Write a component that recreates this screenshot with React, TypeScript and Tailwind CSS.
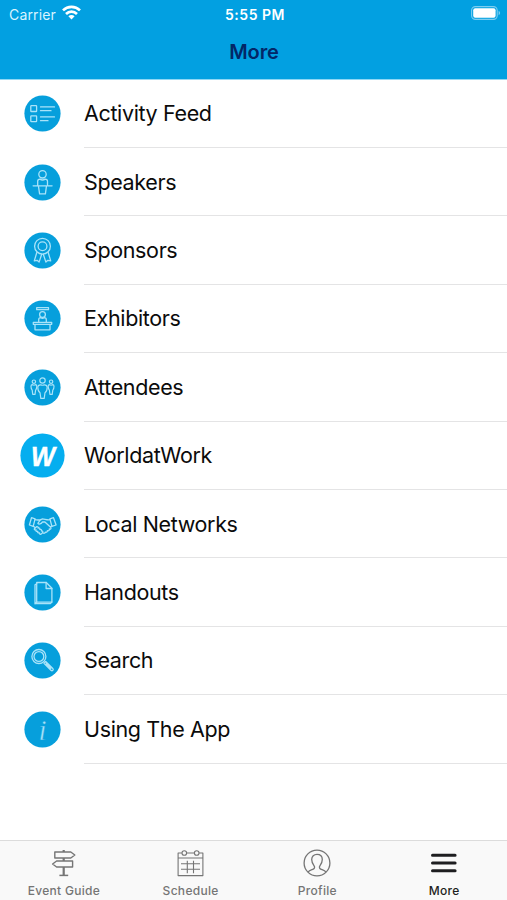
import React from 'react';

const ink = {
  fill: 'none',
  stroke: '#a9e3f9',
  strokeWidth: 1.3,
  strokeLinejoin: 'round',
  strokeLinecap: 'round',
} as const;

const FeedIcon = () => (
  <g {...ink}>
    <rect x="6.3" y="10.2" width="5.8" height="5.8" rx="0.6" />
    <rect x="6.3" y="20.4" width="5.8" height="5.8" rx="0.6" />
    <path d="M16 11.4h14M16 15.2h10.5M16 21.4h14M16 25.2h7.5" />
  </g>
);

const SpeakerIcon = () => (
  <g {...ink}>
    <circle cx="18" cy="9.8" r="3.7" />
    <path d="M13.2 21v-4.2c0-1.5.9-2.2 2.2-2.2 1.6 1.1 3.7 1.1 5.3 0 1.3 0 2.3.7 2.3 2.2V21M8.6 21.3h19M14 22l1.1 7.3h5.8l1-7.3" />
  </g>
);

const RibbonIcon = () => (
  <g {...ink}>
    <circle cx="18" cy="13.7" r="7.9" />
    <circle cx="18" cy="13.7" r="4.4" />
    <path d="M12.3 20l-2.5 8.4 2.8-.6 2 1.8 2.6-7.8M23.7 20l2.5 8.4-2.8-.6-2 1.8-2.6-7.8" />
  </g>
);

const BoothIcon = () => (
  <g {...ink}>
    <rect x="12.2" y="7.2" width="11.8" height="2" />
    <circle cx="18" cy="14" r="2.9" />
    <path d="M14.2 21.5v-2.3c0-1.3.9-2 2-2 1.2.7 2.4.7 3.6 0 1.2 0 2 .7 2 2v2.3" />
    <path d="M8.8 21.8h18.4v2H8.8zM10.5 23.8v5.5h15v-5.5" />
  </g>
);

const PeopleIcon = () => (
  <g {...ink} strokeWidth={1.2}>
    <circle cx="18" cy="11" r="2.7" />
    <path d="M16.2 15.3c-1.8 0-2.9.8-2.9 2.5 0 2.4.4 4.3 2.2 5.4l.8 5.6h3.4l.8-5.6c1.8-1.1 2.2-3 2.2-5.4 0-1.7-1.1-2.5-2.9-2.5-1.2.6-2.4.6-3.6 0z" />
    <circle cx="9.4" cy="12.2" r="1.7" />
    <path d="M8 15.2c-1 0-1.5.6-1.5 1.6 0 1.7.3 3 1.2 3.8l.5 4.2h2.3l.6-4.2c.9-.8 1.2-2.1 1.2-3.8 0-1-.5-1.6-1.5-1.6-.9.5-1.9.5-2.8 0z" />
    <circle cx="26.6" cy="12.2" r="1.7" />
    <path d="M25.2 15.2c-1 0-1.5.6-1.5 1.6 0 1.7.3 3 1.2 3.8l.5 4.2h2.3l.6-4.2c.9-.8 1.2-2.1 1.2-3.8 0-1-.5-1.6-1.5-1.6-.9.5-1.9.5-2.8 0z" />
  </g>
);

const HandshakeIcon = () => (
  <g {...ink}>
    <path d="M7 11.2l3.6 1.2-1.9 7.4-3.8-1.3zM29 11.2l-3.6 1.2 2 7.4 4.2-1.3z" />
    <path d="M10.5 13.2c3 .7 5 .3 7-.6M25.4 13.2c-3.2.5-5.2-.8-7.4-.8-1.8.5-3.6 2.6-4.6 4.4.9 1.4 2.9.8 4.6-1.3h2.4l6 5.6c.5 1.2-.6 2-1.7 1.4M27.3 19.6l-1.5.8M24.7 22.5c.5 1.4-.6 2.2-1.9 1.7.2 1.2-.8 1.9-1.9 1.4-.2 1.2-1.5 1.4-2.3.9" />
    <path d="M8.9 19.7l1.6 1.4M9.9 22.2l2.2-2c1.2-.3 1.9.5 1.5 1.4 1.4-.5 2.2.4 1.7 1.4 1.4-.4 2.1.5 1.6 1.5 1.3-.2 1.8.8 1.1 1.7l-1.4 1.4c-1.2.5-2-.3-1.6-1.3-1.2.5-2.1-.3-1.7-1.4-1.3.4-2.2-.4-1.7-1.5-1.3.3-2.1-.4-1.7-1.2z" />
  </g>
);

const DocIcon = () => (
  <g {...ink}>
    <path d="M12.2 8h9.6l5.6 5.8v13.8H12.2z" />
    <path d="M21.6 8v6h5.8M12.2 9.2l-1.7 1.2v18.8h15.2l1.7-1.6M10.5 29.2l1.7-1.6" />
  </g>
);

const SearchIcon = () => (
  <g {...ink}>
    <circle cx="14.4" cy="14" r="7" />
    <circle cx="14.4" cy="14" r="4.9" />
    <path d="M19.5 20.8l1.7-1.8 7.3 7.3c.8 1-.7 2.6-1.8 1.7zM21.7 21.3l4.6 4.6" />
  </g>
);

const InfoIcon = () => (
  <text x="18" y="28" textAnchor="middle" fontSize="29" fontStyle="italic" fontFamily="Liberation Serif, serif" fill="#a9e3f9" stroke="#069fdc" strokeWidth="0.5">i</text>
);

const items = [
  { label: 'Activity Feed', icon: FeedIcon },
  { label: 'Speakers', icon: SpeakerIcon },
  { label: 'Sponsors', icon: RibbonIcon },
  { label: 'Exhibitors', icon: BoothIcon },
  { label: 'Attendees', icon: PeopleIcon },
  { label: 'WorldatWork', icon: null },
  { label: 'Local Networks', icon: HandshakeIcon },
  { label: 'Handouts', icon: DocIcon },
  { label: 'Search', icon: SearchIcon },
  { label: 'Using The App', icon: InfoIcon },
];

const SignpostIcon = () => (
  <g strokeWidth="1.4">
    <path d="M5.8 3h16l4 3-4 3h-16zM23.6 12h-16l-4 3 4 3h16z" />
    <path d="M14.7 1v2M14.7 9v3M14.7 18v8.4" strokeWidth="2.2" />
    <path d="M10.4 26.4h8.8" strokeWidth="1.5" />
  </g>
);

const CalendarIcon = () => (
  <g strokeWidth="1.1">
    <path d="M5.9 4H2.1v22.6h24.8V4h-3.8M10.7 4h7.6M2.1 9h24.8" />
    <circle cx="8.3" cy="4" r="2.3" />
    <circle cx="20.7" cy="4" r="2.3" />
    <path d="M5 14.7h19M5 20.3h19M11.3 11.7v12.6M17.5 11.7v12.6" />
  </g>
);

const ProfileIcon = () => (
  <g strokeWidth="1.3">
    <circle cx="14" cy="14" r="12.9" />
    <path d="M5 23.2c1.4-1.8 3.4-2.2 5.3-3.1 1.4-.7 1.6-2.2.8-3.3-1.4-1.7-2.4-3.8-2.4-6.2 0-3.3 2.2-5.3 5.3-5.3s5.3 2 5.3 5.3c0 2.4-1 4.5-2.4 6.2-.8 1.1-.6 2.6.8 3.3 1.9.9 3.9 1.3 5.3 3.1" />
  </g>
);

const MenuIcon = () => (
  <path d="M2.5 6.3h22.6M2.5 14h22.6M2.5 21.7h22.6" strokeWidth="3" strokeLinecap="round" />
);

const tabs = [
  { label: 'Event Guide', icon: SignpostIcon },
  { label: 'Schedule', icon: CalendarIcon },
  { label: 'Profile', icon: ProfileIcon },
  { label: 'More', icon: MenuIcon, active: true },
];

const StatusBar = () => (
  <div className="grid h-7 grid-cols-3 items-center pl-[9px] pr-[6px] text-white">
    <div className="flex items-center gap-1.5 text-[14px] tracking-[0.15px]">
      <span className="text-[#d9f4ff]">Carrier</span>
      <svg width="19" height="15" viewBox="0 0 19 15" fill="none" stroke="white" strokeWidth="2.7" className="-mt-[3px]">
        <path d="M1 5.4c4.8-4.6 12.2-4.6 17 0M4 8.9c3.2-3 7.8-3 11 0" />
        <path d="M9.5 14.5L6.4 11.3c1.8-1.6 4.4-1.6 6.2 0z" fill="white" stroke="none" />
      </svg>
    </div>
    <span className="text-center text-[14px] font-semibold tracking-[0.5px]">5:55 PM</span>
    <svg width="30" height="14" viewBox="0 0 30 14" className="-mt-0.5 justify-self-end">
      <rect x="0.6" y="0.6" width="25.6" height="12.8" rx="3.8" fill="none" stroke="#7dcdf0" strokeWidth="1.1" />
      <rect x="2.2" y="2.2" width="22.4" height="9.6" rx="2" fill="white" />
      <path d="M27.6 4.8c2 .8 2 3.6 0 4.4z" fill="#7dcdf0" />
    </svg>
  </div>
);

export default function App() {
  return (
    <div className="flex h-[900px] w-[507px] flex-col overflow-hidden bg-white font-['Inter',sans-serif]">
      <header className="h-[80px] shrink-0 border-b border-[#8fd8f5] bg-[#02a0e1]">
        <StatusBar />
        <h1 className="pt-[10px] pl-px text-center text-[20px] leading-7 font-semibold tracking-[-0.1px] text-[#032767]">More</h1>
      </header>

      <ul className="-mt-[0.4px] flex-1">
        {items.map(({ label, icon: Icon }) => (
          <li key={label} className="flex h-[68.4px] items-center">
            <div className="flex w-[84px] shrink-0 justify-center pl-px">
              {Icon ? (
                <svg width="37" height="37" viewBox="-0.5 -0.5 37 37">
                  <circle cx="18" cy="18" r="18.1" fill="#069fdc" />
                  <Icon />
                </svg>
              ) : (
                <svg width="45" height="45" viewBox="0 0 45 45">
                  <circle cx="22.5" cy="22.5" r="22.1" fill="#05aeef" />
                  <text x="23" y="33" textAnchor="middle" fontSize="27.5" fontWeight="700" fontStyle="italic" fontFamily="Liberation Sans, sans-serif" textLength="24" lengthAdjust="spacingAndGlyphs" fill="white" stroke="white" strokeWidth="0.5">W</text>
                </svg>
              )}
            </div>
            <div className="flex h-full flex-1 items-center border-b border-[#e4e4e5] text-[21.5px] tracking-[-0.36px] text-[#0b0b0b]">
              {label}
            </div>
          </li>
        ))}
      </ul>

      <nav className="grid h-[60px] shrink-0 grid-cols-4 border-t border-[#dcdcdc] bg-[#f9f9f9]">
        {tabs.map(({ label, icon: Icon, active }) => (
          <div key={label} className={active ? 'flex flex-col items-center pt-2 text-[#1e1e20]' : 'flex flex-col items-center pt-2 text-[#757575]'}>
            <svg width="28" height="28" viewBox="0 0 28 28" fill="none" stroke="currentColor" strokeLinejoin="round">
              <Icon />
            </svg>
            <span className="mt-1.5 pl-px text-[12px] leading-4 font-medium tracking-[0.3px]">{label}</span>
          </div>
        ))}
      </nav>
    </div>
  );
}
